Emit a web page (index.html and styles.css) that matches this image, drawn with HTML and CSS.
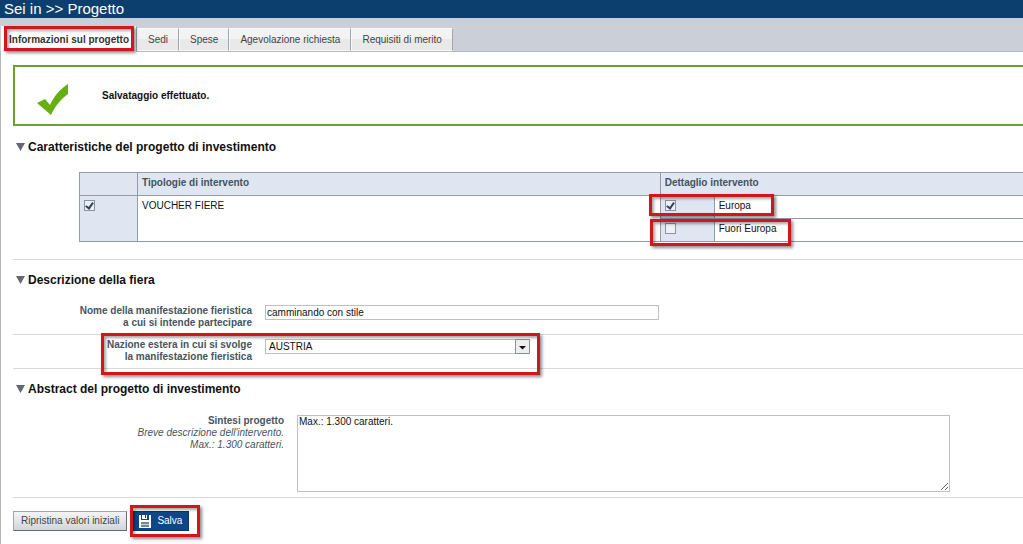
FILE: index.html
```html
<!DOCTYPE html>
<html lang="it">
<head>
<meta charset="utf-8">
<meta name="viewport" content="width=device-width, initial-scale=1">
<title>Sei in &gt;&gt; Progetto</title>
<link rel="stylesheet" href="styles.css">
</head>
<body>
<header class="topbar">Sei in &gt;&gt; Progetto</header>
<nav class="tabs">
  <a class="tab tab-active marked mark-tab" href="#info">Informazioni sul progetto</a>
  <a class="tab" href="#sedi">Sedi</a>
  <a class="tab" href="#spese">Spese</a>
  <a class="tab" href="#agevolazione">Agevolazione richiesta</a>
  <a class="tab" href="#requisiti">Requisiti di merito</a>
</nav>
<main class="page">
  <div class="notice" role="status">
    <svg class="notice-icon" viewBox="0 0 33 32" aria-hidden="true"><path d="M0 19 8 15l5 6C17 12 23 5 31 0v10C25 14 18 22 14 31z" fill="#65b010"/></svg>
    <strong>Salvataggio effettuato.</strong>
  </div>
  <form>
    <section class="section section-types">
      <h2 class="heading"><svg class="arrow" viewBox="0 0 9 8" aria-hidden="true"><path d="M0 0h9L4.500 8z"/></svg>Caratteristiche del progetto di investimento</h2>
      <table class="types">
        <colgroup><col class="col-check"><col class="col-type"><col class="col-detail"><col></colgroup>
        <thead>
          <tr><th></th><th>Tipologie di intervento</th><th colspan="2">Dettaglio intervento</th></tr>
        </thead>
        <tbody>
          <tr>
            <td class="shade" rowspan="2"><input class="check" type="checkbox" id="voucher" checked></td>
            <td rowspan="2"><label for="voucher">VOUCHER FIERE</label></td>
            <td class="shade"><div class="marked mark-europa"><input class="check" type="checkbox" id="europa" checked></div></td>
            <td><label for="europa">Europa</label></td>
          </tr>
          <tr>
            <td class="shade"><div class="marked mark-fuori"><input class="check" type="checkbox" id="fuori"></div></td>
            <td><label for="fuori">Fuori Europa</label></td>
          </tr>
        </tbody>
      </table>
    </section>
    <section class="section">
      <h2 class="heading"><svg class="arrow" viewBox="0 0 9 8" aria-hidden="true"><path d="M0 0h9L4.500 8z"/></svg>Descrizione della fiera</h2>
      <div class="row row-first">
        <label class="label" for="nome">Nome della manifestazione fieristica<br>a cui si intende partecipare</label>
        <input class="field text-field" id="nome" type="text" value="camminando con stile">
      </div>
      <div class="row">
        <label class="label marked mark-nation" for="nazione">Nazione estera in cui si svolge<br>la manifestazione fieristica</label>
        <div class="select-wrap">
          <select class="field select" id="nazione"><option>AUSTRIA</option></select>
          <svg class="select-arrow" viewBox="0 0 15 15" aria-hidden="true"><path d="M.5.500h14v14H.5z" fill="#eceef0" stroke="#8a9296"/><path d="M4 7h7L7.500 10.500z" fill="#111"/></svg>
        </div>
      </div>
    </section>
    <section class="section">
      <h2 class="heading"><svg class="arrow" viewBox="0 0 9 8" aria-hidden="true"><path d="M0 0h9L4.500 8z"/></svg>Abstract del progetto di investimento</h2>
      <div class="row row-wide">
        <label class="label" for="sintesi">Sintesi progetto<br><em>Breve descrizione dell'intervento.<br>Max.: 1.300 caratteri.</em></label>
        <textarea class="field area" id="sintesi">Max.: 1.300 caratteri.</textarea>
      </div>
    </section>
    <div class="actions">
      <button class="button" type="reset">Ripristina valori iniziali</button>
      <button class="button save marked mark-save" type="button"><svg class="disk" viewBox="0 0 12 13" aria-hidden="true"><path d="M0 0h12v13H0z" fill="#fff"/><path d="M2 0h8v5H2z" fill="#0d4786"/><path d="M3 0h5v4H3z" fill="#fff"/><path d="M6 0h1v3H6z" fill="#0d4786"/><path d="M2 7h8v5H2z" fill="#71869a"/><path d="M2 9h8v1H2z" fill="#c8d5df"/></svg>Salva</button>
    </div>
  </form>
</main>
</body>
</html>
```
FILE: styles.css
```css
*, *::before, *::after { box-sizing: border-box; }

body {
  display: flex;
  flex-direction: column;
  min-height: 100vh;
  margin: 0;
  overflow-x: hidden;
  background: #fff;
  color: #111;
  font: 10px/12px "Liberation Sans", Arial, sans-serif;
}

.topbar {
  padding-left: 4px;
  background: #0c3f6e;
  color: #fff;
  font-size: 15px;
  line-height: 18px;
}

.tabs {
  display: flex;
  align-items: flex-end;
  height: 34px;
  padding-left: 1px;
  background: #cacfd8;
  border-bottom: 1px solid #b4b9c3;
}

.tab {
  height: 23px;
  padding: 0 10px;
  background: linear-gradient(#f3f3f3 50%, #e9e9e9 50%);
  border: 1px solid #f8f8f8;
  border-right-color: #a0a6ae;
  color: #444;
  line-height: 21px;
  text-decoration: none;
}

.tab-active {
  height: 26px;
  padding: 0 7px;
  margin-bottom: -1px;
  background: #fff;
  color: #333;
  font-weight: bold;
  line-height: 25px;
}

.page {
  flex: 1;
  padding: 13px 0 8px 12px;
  border-left: 1px solid #b5b5b8;
}

.notice {
  display: flex;
  align-items: center;
  gap: 32px;
  height: 61px;
  padding-left: 22px;
  border: 2px solid #6ba030;
  border-right: 0;
}

.notice-icon { width: 33px; height: 32px; margin-top: 8px; }

.section {
  padding-top: 12px;
  border-bottom: 1px solid #d9d9d9;
}

.section-types { padding-top: 13px; padding-bottom: 17px; }

.heading {
  display: flex;
  align-items: center;
  gap: 3px;
  margin: 0;
  padding-left: 3px;
  font-size: 12px;
  line-height: 16px;
}

.arrow { width: 9px; height: 8px; fill: #626975; }

.types {
  width: calc(100% - 66px);
  margin: 17px 0 0 66px;
  border-collapse: collapse;
  table-layout: fixed;
}

.types th,
.types td {
  height: 23px;
  padding: 4px 4px 3px;
  border: 1px solid #929ca8;
  border-right: 0;
  text-align: left;
  vertical-align: top;
}

.types th { background: #dfe6f1; color: #43525f; }
.types .shade { background: #dfe6f1; }
.col-check { width: 58px; }
.col-type { width: 55.4%; }
.col-detail { width: 54px; }

.check {
  display: block;
  appearance: none;
  width: 11px;
  height: 11px;
  margin: 0;
  background: #eef1f5;
  border: 1px solid #8c949d;
}

.check:checked::after {
  content: "";
  display: block;
  width: 5px;
  height: 8px;
  margin: 0 0 0 2px;
  border: solid #34435d;
  border-width: 0 2px 2px 0;
  transform: rotate(35deg);
}

.row {
  display: grid;
  grid-template-columns: 239px minmax(0, 1fr);
  gap: 13px;
  padding: 4px 0 5px;
  border-top: 1px solid #d9d9d9;
}

.row-first { margin-top: 13px; border-top: 0; }
.row-wide { grid-template-columns: 271px minmax(0, 1fr); margin-top: 14px; border-top: 0; }

.label { color: #48545e; font-weight: bold; text-align: right; }
.label em { font-weight: normal; }

.field {
  background: #fff;
  border: 1px solid #c0c0c0;
  border-radius: 0;
  color: #111;
  font: inherit;
}

.text-field { width: 52%; height: 15px; padding: 0 1px; }

.select-wrap { position: relative; width: 35%; }
.select { display: block; appearance: none; width: 100%; height: 15px; padding: 0 3px; }
.select-arrow { position: absolute; top: 0; right: 0; width: 15px; height: 15px; pointer-events: none; }

.area { display: block; width: 90%; height: 77px; padding: 0 1px; }

.actions { display: flex; gap: 6px; padding-top: 13px; }

.button {
  display: flex;
  align-items: center;
  height: 20px;
  padding: 0 7px;
  background: linear-gradient(#f4f4f5, #d3d5d9);
  border: 1px solid #a2a5aa;
  border-right-color: #686b70;
  border-bottom-color: #686b70;
  color: #444;
  font: inherit;
}

.save { gap: 6px; padding: 0 6px 0 5px; background: #0d4786; border-color: #0a3767; color: #fff; }
.disk { width: 12px; height: 13px; }

/* Red highlight frames */
.marked { position: relative; }
.marked::before {
  content: "";
  position: absolute;
  border: 3px solid #cd1820;
  box-shadow: 2px 2px 3px rgba(0, 0, 0, 0.45), inset 2px 2px 3px rgba(0, 0, 0, 0.35);
  pointer-events: none;
  z-index: 1;
}
.mark-tab::before { inset: -1px 2px 0 2px; }
.mark-europa::before { left: -16px; top: -6px; width: 125px; height: 22px; }
.mark-fuori::before { left: -15px; top: -4px; width: 141px; height: 27px; }
.mark-nation::before { left: 88px; top: -6px; width: 439px; height: 42px; }
.mark-save::before { inset: -7px -12px -7px -4px; }
```
